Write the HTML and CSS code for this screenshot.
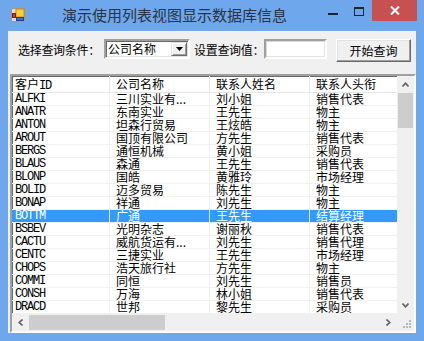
FILE: index.html
```html
<!DOCTYPE html>
<html>
<head>
<meta charset="utf-8">
<link rel="stylesheet" href="styles.css">
</head>
<body>
<div class="window">
  <div class="titlebar">
    <svg class="app-icon" width="14" height="14" viewBox="0 0 14 14">
      <rect x="0.5" y="0.5" width="13" height="13" fill="#dcdcdc" stroke="#9a9a9a"/>
      <rect x="5" y="1" width="8" height="8" fill="#f7d13a" stroke="#d08a12" stroke-width="1"/>
      <rect x="1.5" y="5.5" width="3" height="4" fill="#d23a2a" stroke="#8a1a10" stroke-width="1"/>
      <rect x="5.5" y="9.5" width="7" height="3" fill="#3a6fd8" stroke="#1f3f8a" stroke-width="1"/>
    </svg>
    <div class="title">演示使用列表视图显示数据库信息</div>
    <div class="controls">
      <div class="ctl ctl-min"><span class="min-line"></span></div>
      <div class="ctl ctl-max"><span class="max-box"></span></div>
      <div class="ctl ctl-close">
        <svg width="10" height="9" viewBox="0 0 10 9"><path d="M1 0.5 L9 8.5 M9 0.5 L1 8.5" stroke="#fff" stroke-width="2"/></svg>
      </div>
    </div>
  </div>
  <div class="client">
    <div class="toolbar">
      <div class="label lbl1">选择查询条件：</div>
      <div class="combo">
        <span class="combo-text">公司名称</span>
        <span class="combo-btn"><svg width="7" height="4" viewBox="0 0 7 4"><path d="M0 0 H7 L3.5 4 Z" fill="#000"/></svg></span>
      </div>
      <div class="label lbl2">设置查询值：</div>
      <div class="textbox"></div>
      <div class="button">开始查询</div>
    </div>
    <div class="listview">
      <div class="table-area">
        <div class="row header">
          <div class="cell c1">客户<span class="mono">ID</span></div>
          <div class="cell">公司名称</div>
          <div class="cell">联系人姓名</div>
          <div class="cell">联系人头衔</div>
        </div>
        <div class="row"><div class="cell c1 mono">ALFKI</div><div class="cell">三川实业有...</div><div class="cell">刘小姐</div><div class="cell">销售代表</div></div>
        <div class="row"><div class="cell c1 mono">ANATR</div><div class="cell">东南实业</div><div class="cell">王先生</div><div class="cell">物主</div></div>
        <div class="row"><div class="cell c1 mono">ANTON</div><div class="cell">坦森行贸易</div><div class="cell">王炫皓</div><div class="cell">物主</div></div>
        <div class="row"><div class="cell c1 mono">AROUT</div><div class="cell">国顶有限公司</div><div class="cell">方先生</div><div class="cell">销售代表</div></div>
        <div class="row"><div class="cell c1 mono">BERGS</div><div class="cell">通恒机械</div><div class="cell">黄小姐</div><div class="cell">采购员</div></div>
        <div class="row"><div class="cell c1 mono">BLAUS</div><div class="cell">森通</div><div class="cell">王先生</div><div class="cell">销售代表</div></div>
        <div class="row"><div class="cell c1 mono">BLONP</div><div class="cell">国皓</div><div class="cell">黄雅玲</div><div class="cell">市场经理</div></div>
        <div class="row"><div class="cell c1 mono">BOLID</div><div class="cell">迈多贸易</div><div class="cell">陈先生</div><div class="cell">物主</div></div>
        <div class="row"><div class="cell c1 mono">BONAP</div><div class="cell">祥通</div><div class="cell">刘先生</div><div class="cell">物主</div></div>
        <div class="row selected"><div class="cell c1 mono">BOTTM</div><div class="cell">广通</div><div class="cell">王先生</div><div class="cell">结算经理</div></div>
        <div class="row"><div class="cell c1 mono">BSBEV</div><div class="cell">光明杂志</div><div class="cell">谢丽秋</div><div class="cell">销售代表</div></div>
        <div class="row"><div class="cell c1 mono">CACTU</div><div class="cell">威航货运有...</div><div class="cell">刘先生</div><div class="cell">销售代理</div></div>
        <div class="row"><div class="cell c1 mono">CENTC</div><div class="cell">三捷实业</div><div class="cell">王先生</div><div class="cell">市场经理</div></div>
        <div class="row"><div class="cell c1 mono">CHOPS</div><div class="cell">浩天旅行社</div><div class="cell">方先生</div><div class="cell">物主</div></div>
        <div class="row"><div class="cell c1 mono">COMMI</div><div class="cell">同恒</div><div class="cell">刘先生</div><div class="cell">销售员</div></div>
        <div class="row"><div class="cell c1 mono">CONSH</div><div class="cell">万海</div><div class="cell">林小姐</div><div class="cell">销售代表</div></div>
        <div class="row"><div class="cell c1 mono">DRACD</div><div class="cell">世邦</div><div class="cell">黎先生</div><div class="cell">采购员</div></div>
      </div>
      <div class="vscroll">
        <div class="sb-btn"><svg width="7" height="5" viewBox="0 0 7 5"><path d="M0.5 4.5 L3.5 1.2 L6.5 4.5" fill="none" stroke="#606060" stroke-width="1.6"/></svg></div>
        <div class="vtrack"><div class="vthumb"></div></div>
        <div class="sb-btn"><svg width="7" height="5" viewBox="0 0 7 5"><path d="M0.5 0.5 L3.5 3.8 L6.5 0.5" fill="none" stroke="#606060" stroke-width="1.6"/></svg></div>
      </div>
      <div class="hscroll">
        <div class="sb-btn"><svg width="5" height="7" viewBox="0 0 5 7"><path d="M4.5 0.5 L1.2 3.5 L4.5 6.5" fill="none" stroke="#606060" stroke-width="1.6"/></svg></div>
        <div class="htrack"><div class="hthumb"></div></div>
        <div class="sb-btn"><svg width="5" height="7" viewBox="0 0 5 7"><path d="M0.5 0.5 L3.8 3.5 L0.5 6.5" fill="none" stroke="#606060" stroke-width="1.6"/></svg></div>
      </div>
      <div class="corner">
        <svg width="17" height="17" viewBox="0 0 17 17">
          <g fill="#b8b8b8">
            <rect x="12" y="6" width="2" height="2"/>
            <rect x="9" y="9" width="2" height="2"/><rect x="12" y="9" width="2" height="2"/>
            <rect x="6" y="12" width="2" height="2"/><rect x="9" y="12" width="2" height="2"/><rect x="12" y="12" width="2" height="2"/>
          </g>
        </svg>
      </div>
    </div>
  </div>
</div>
</body>
</html>
```

FILE: styles.css
```css
html, body {
  margin: 0;
  padding: 0;
}
body {
  width: 424px;
  height: 341px;
  overflow: hidden;
  font-family: "Noto Sans CJK SC", sans-serif;
}
.window {
  width: 424px;
  height: 341px;
  background: #6ea7ec;
  display: flex;
  flex-direction: column;
}
.titlebar {
  height: 31px;
  display: flex;
  align-items: flex-start;
  flex: none;
}
.app-icon {
  margin: 8px 0 0 11px;
  flex: none;
}
.title {
  margin-left: 37px;
  font-size: 15px;
  line-height: 30px;
  color: #2c3340;
  white-space: nowrap;
}
.controls {
  margin-left: auto;
  margin-right: 7px;
  display: flex;
}
.ctl {
  height: 21px;
  display: flex;
  justify-content: center;
}
.ctl-min {
  width: 26px;
}
.min-line {
  width: 10px;
  height: 2px;
  background: #1e2530;
  margin-top: 13px;
}
.ctl-max {
  width: 26px;
}
.max-box {
  box-sizing: border-box;
  width: 10px;
  height: 9px;
  border: 1px solid #1e2530;
  border-top-width: 2px;
  margin-top: 7px;
}
.ctl-close {
  width: 45px;
  background: #c75050;
  align-items: center;
}
.client {
  flex: 1;
  margin: 0 8px 8px;
  background: #f0f0f0;
  display: flex;
  flex-direction: column;
}
.toolbar {
  margin-top: 8px;
  height: 23px;
  display: flex;
  align-items: flex-start;
  font-size: 12px;
  color: #000;
}
.label {
  line-height: 20px;
  margin-top: 1px;
  white-space: nowrap;
  letter-spacing: -0.3px;
}
.lbl1 {
  margin-left: 10px;
  width: 86px;
}
.lbl2 {
  margin-left: 4px;
  width: 70px;
}
.combo {
  box-sizing: border-box;
  width: 86px;
  height: 20px;
  background: #fff;
  border: 2px solid;
  border-color: #a0a0a0 #fff #fff #a0a0a0;
  box-shadow: inset 1px 1px 0 #696969, inset -1px -1px 0 #e3e3e3;
  display: flex;
  align-items: center;
  padding: 0 1px 0 2px;
}
.combo-text {
  flex: 1;
  line-height: 16px;
}
.combo-btn {
  box-sizing: border-box;
  width: 16px;
  height: 14px;
  background: #f0f0f0;
  border: 1px solid;
  border-color: #e3e3e3 #696969 #696969 #e3e3e3;
  box-shadow: inset 1px 1px 0 #fff, inset -1px -1px 0 #a0a0a0;
  display: flex;
  align-items: center;
  justify-content: center;
}
.textbox {
  box-sizing: border-box;
  width: 63px;
  height: 20px;
  background: #fff;
  border: 2px solid;
  border-color: #a0a0a0 #fff #fff #a0a0a0;
  box-shadow: inset 1px 1px 0 #dcdcdc, inset -1px -1px 0 #e3e3e3;
}
.button {
  box-sizing: border-box;
  margin-left: 9px;
  width: 75px;
  height: 23px;
  background: #f0f0f0;
  border: 1px solid;
  border-color: #fff #696969 #696969 #fff;
  box-shadow: inset -1px -1px 0 #a0a0a0, inset 1px 1px 0 #e3e3e3;
  display: flex;
  align-items: center;
  justify-content: center;
  line-height: 20px;
}
.listview {
  box-sizing: border-box;
  margin: 12px 0 0 2px;
  width: 406px;
  height: 259px;
  border: 2px solid;
  border-color: #a0a0a0 #fff #fff #a0a0a0;
  box-shadow: inset 1px 1px 0 #696969, inset -1px -1px 0 #e3e3e3;
  background: #fff;
  display: grid;
  grid-template-columns: 1fr 17px;
  grid-template-rows: 1fr 17px;
  overflow: hidden;
}
.table-area {
  overflow: hidden;
  font-size: 12px;
  color: #000;
}
.row {
  display: grid;
  grid-template-columns: 98px 100px 100px 100px;
  width: 398px;
  height: 13px;
  box-sizing: border-box;
  border-bottom: 1px solid #f0f0f0;
}
.row.header {
  height: 17px;
  border-bottom: 1px solid #e5e5e5;
}
.cell {
  box-sizing: border-box;
  border-right: 1px solid #f0f0f0;
  padding-left: 6px;
  line-height: 12px;
  white-space: nowrap;
}
.cell.c1 {
  padding-left: 3px;
}
.header .cell {
  border-right: 1px solid #e5e5e5;
  line-height: 16px;
}
.mono {
  font-family: "Liberation Mono", monospace;
  font-size: 12px;
  letter-spacing: -1.2px;
}
.selected {
  background: #3399ff;
  color: #fff;
}
.selected .cell {
  border-right-color: #e0eeff;
}
.vscroll {
  background: #f0f0f0;
  display: flex;
  flex-direction: column;
}
.sb-btn {
  width: 17px;
  height: 17px;
  flex: none;
  display: flex;
  align-items: center;
  justify-content: center;
}
.vtrack {
  flex: 1;
  padding-left: 1px;
}
.vthumb {
  width: 15px;
  height: 35px;
  background: #cdcdcd;
}
.hscroll {
  background: #f0f0f0;
  display: flex;
}
.htrack {
  flex: 1;
  padding-top: 1px;
}
.hthumb {
  width: 136px;
  height: 15px;
  background: #cdcdcd;
}
.corner {
  background: #f0f0f0;
}
.corner svg {
  display: block;
}
```
